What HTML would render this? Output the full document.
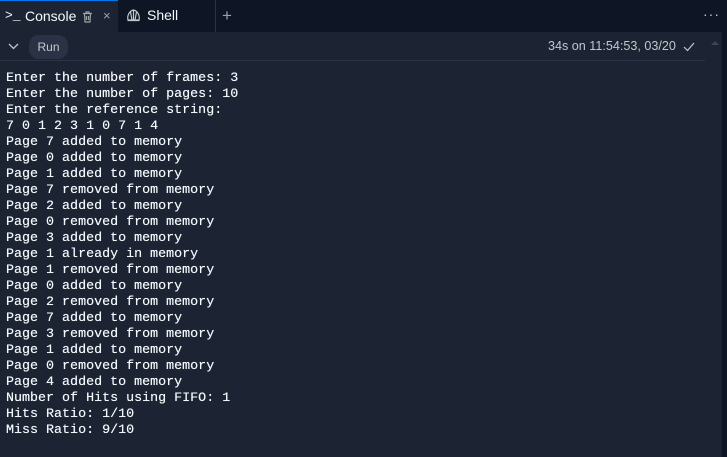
<!DOCTYPE html>
<html><head><style>
body{margin:0;width:727px;height:457px;background:#0e1525;overflow:hidden;font-family:"Liberation Sans",sans-serif;position:relative}
.panel{position:absolute;left:0;top:0;width:722px;height:457px;background:#1c2333;border-top-right-radius:6px}
.tabs{position:absolute;left:0;top:0;width:722px;height:32px;background:#0e1525;border-top-right-radius:6px}
.tab{position:absolute;top:0;height:32px;color:#f5f9fc;font-size:14px;line-height:32px}
.t1{left:0;width:118px;background:#1c2333;border-top:1px solid #0079f2;box-sizing:border-box}
.t2{left:119px;width:96px;border-right:1px solid #2b3245;height:32px}
pre{position:absolute;left:6px;top:71px;margin:0;font-family:"Liberation Mono",monospace;font-size:13.35px;line-height:16px;color:#f5f9fc;font-weight:normal;text-shadow:0 0 0.4px #f5f9fc}
</style></head><body>
<div class="panel"></div>
<div class="tabs"></div>
<div class="tab t1"><span style="position:absolute;left:5px;top:-1px;font-family:'Liberation Mono';font-size:13px">&gt;_</span><span style="position:absolute;left:25px;top:-1px">Console</span>
<svg style="position:absolute;left:82px;top:10px" width="11" height="12" viewBox="0 0 11 12" fill="none" stroke="#9da2a6" stroke-width="1.2"><path d="M1 2.5h9M4 2.5V1h3v1.5M2.5 2.5l.5 8.5h5l.5-8.5M4.5 5v4M6.5 5v4"/></svg>
<span style="position:absolute;left:103px;top:-1px;color:#9da2a6;font-size:13px">×</span></div>
<div class="tab t2"><svg style="position:absolute;left:7px;top:8px" width="15" height="15" viewBox="0 0 15 15" fill="none" stroke="#c2c8cc" stroke-width="1.2"><path d="M2 12C1 8 3 3 7.5 2 12 3 14 8 13 12ZM7.5 2v10M4.5 4l1.5 8M10.5 4l-1.5 8M1.5 12.5h12"/></svg><span style="position:absolute;left:28px;top:-1px">Shell</span></div>
<div style="position:absolute;left:222px;top:6px;color:#9da2a6;font-size:17px">+</div>
<div style="position:absolute;left:703px;top:6px;color:#c2c8cc;font-size:14px;letter-spacing:1px">···</div>
<svg style="position:absolute;left:8px;top:43px" width="11" height="7" viewBox="0 0 11 7" fill="none" stroke="#c2c8cc" stroke-width="1.3"><path d="M1 1l4.5 4.5L10 1"/></svg>
<div style="position:absolute;left:29px;top:35px;width:39px;height:24px;border-radius:10px;background:#2b3245;color:#c2c8cc;font-size:12px;line-height:24px;text-align:center">Run</div>
<div style="position:absolute;left:548px;top:39px;color:#c2c8cc;font-size:12.6px">34s on 11:54:53, 03/20</div>
<svg style="position:absolute;left:683px;top:42px" width="12" height="10" viewBox="0 0 12 10" fill="none" stroke="#c2c8cc" stroke-width="1.2"><path d="M1 5l3.5 3.5L11 1"/></svg>
<div style="position:absolute;left:0;top:60px;width:705px;height:1px;background:#2b3245"></div>
<div style="position:absolute;left:711px;top:41px;width:0;height:0;border-left:4px solid transparent;border-right:4px solid transparent;border-bottom:4px solid #3d445c"></div>
<pre>Enter the number of frames: 3
Enter the number of pages: 10
Enter the reference string:
7 0 1 2 3 1 0 7 1 4
Page 7 added to memory
Page 0 added to memory
Page 1 added to memory
Page 7 removed from memory
Page 2 added to memory
Page 0 removed from memory
Page 3 added to memory
Page 1 already in memory
Page 1 removed from memory
Page 0 added to memory
Page 2 removed from memory
Page 7 added to memory
Page 3 removed from memory
Page 1 added to memory
Page 0 removed from memory
Page 4 added to memory
Number of Hits using FIFO: 1
Hits Ratio: 1/10
Miss Ratio: 9/10</pre>
</body></html>
